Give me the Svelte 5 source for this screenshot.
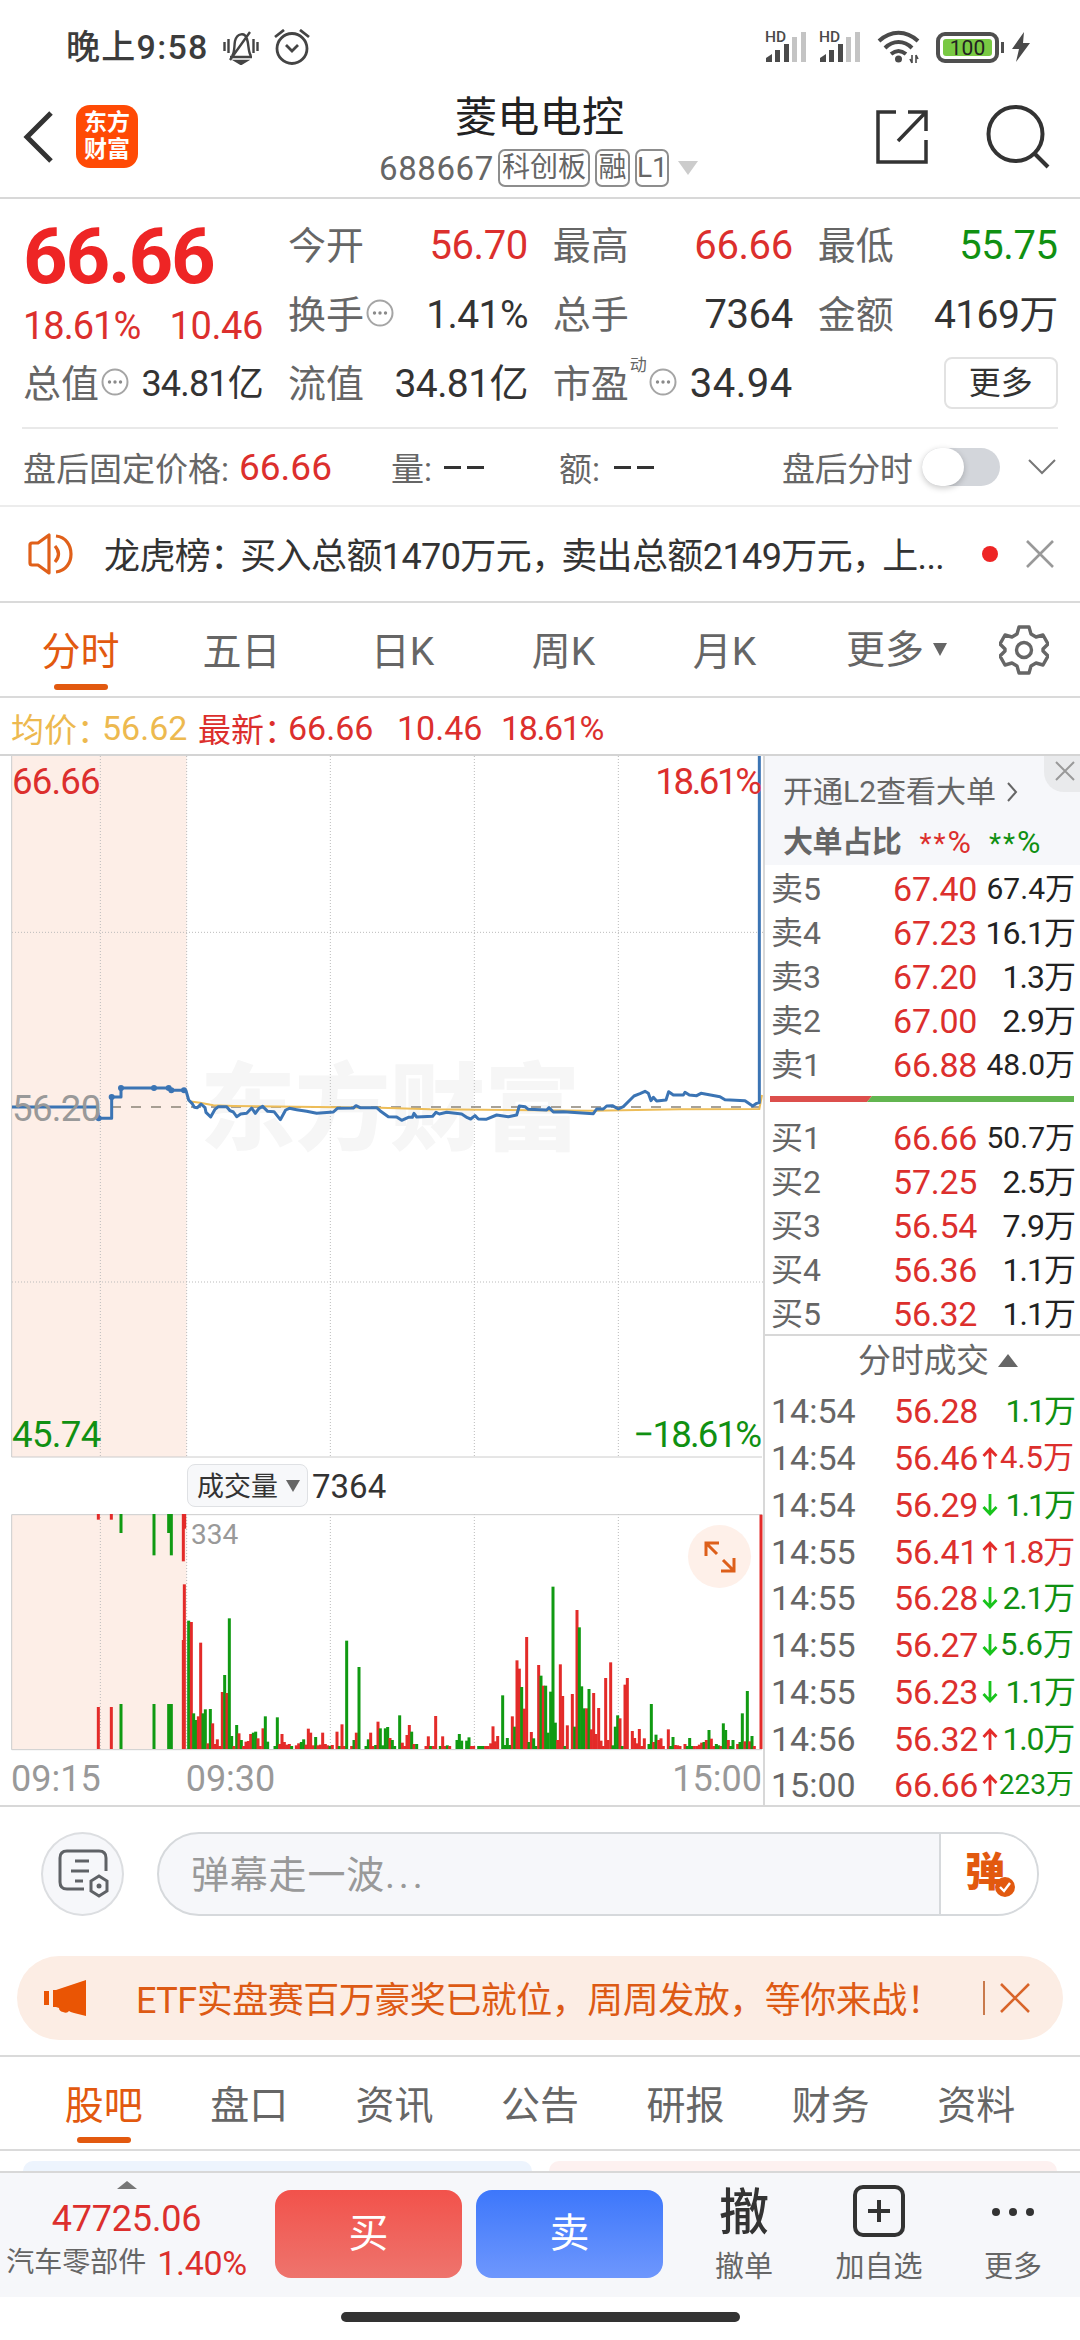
<script>
  const sells = [
    ['卖5', '67.40', '67.4万', true],
    ['卖4', '67.23', '16.1万', false],
    ['卖3', '67.20', '1.3万', false],
    ['卖2', '67.00', '2.9万', false],
    ['卖1', '66.88', '48.0万', true]
  ];
  const buys = [
    ['买1', '66.66', '50.7万', true],
    ['买2', '57.25', '2.5万', false],
    ['买3', '56.54', '7.9万', false],
    ['买4', '56.36', '1.1万', false],
    ['买5', '56.32', '1.1万', false]
  ];
  const deals = [
    ['14:54', '56.28', '', '1.1万', 'green', 'slim'],
    ['14:54', '56.46', 'up', '4.5万', 'red', ''],
    ['14:54', '56.29', 'down', '1.1万', 'green', 'slim'],
    ['14:55', '56.41', 'up', '1.8万', 'red', 'mid'],
    ['14:55', '56.28', 'down', '2.1万', 'green', 'mid'],
    ['14:55', '56.27', 'down', '5.6万', 'green', ''],
    ['14:55', '56.23', 'down', '1.1万', 'green', 'slim'],
    ['14:56', '56.32', 'up', '1.0万', 'green', 'mid'],
    ['15:00', '66.66', 'up', '223万', 'green', 'small']
  ];
  const periods = ['分时', '五日', '日K', '周K', '月K'];
  const sections = ['股吧', '盘口', '资讯', '公告', '研报', '财务', '资料'];

  // Chart units are thirds of a pixel; each entry is colour, x, bar height.
  const parse = (text, shift, base) =>
    text.trim().split(/\s+/).map((s) => {
      const [x, y] = s.slice(1).split(',').map(Number);
      return { color: s[0] === 'r' ? '#e32b29' : '#109a12', x: x + shift, h: base - y };
    });
  const morning = `r550,780 r553,613 g566,722 r574,726 g581,1000 g588,1020 r595,1009 r602,788 g609,1000 g616,988 r624,1090 g631,987 r638,1030 r645,1092 r652,1078 r659,1098 r667,936 g674,885 r681,939 g688,715 g695,1068 r702,1098 g710,1035 r717,1060 g724,1080 r731,1098 r738,1085 r745,1083 r752,1062 g760,1058 g767,1055 r774,1075 r781,1098 r789,1045 g796,1009 g803,1085 g825,1098 g832,1012 r839,1092 r846,1062 r853,1086 r860,1094 r868,1092 g875,1098 r889,1096 r896,1090 g904,1086 g911,1078 r918,1094 r925,1046 r932,1058 r940,1096 g947,1071 r954,1096 r961,1094 r968,1058 r976,1092 r983,1096 g990,1098 r997,1095 r1011,1055 g1018,1098 r1026,1033 r1033,1098 g1040,782 r1055,1098 g1062,1080 r1069,1058 g1077,861 g1098,1098 g1105,1078 r1112,1058 r1119,1098 g1127,1095 r1134,1025 g1141,1045 g1148,1096 g1156,1045 g1163,1041 r1170,1074 g1177,1080 g1184,1098 g1199,1006`;
  const afternoon = `r67,1088 r74,1098 r81,1065 r88,1035 g95,1055 r102,1092 g110,1092 r138,1098 r145,1069 g152,1098 r160,1098 r167,1008 g181,1098 r188,1069 r195,1098 g202,1096 r209,1098 g231,1080 g238,1062 g245,1082 g260,1082 g267,1072 r274,1098 r281,1098 g296,1098 g303,1098 g310,1098 r317,1098 r324,1098 r332,1090 r339,1039 r346,1084 r353,1068 g368,946 g375,1095 g382,1074 g389,1095 r397,1009 g404,1040 r411,841 r418,866 g425,921 r433,986 r440,771 g447,1086 r454,1056 g461,1075 g468,1098 r476,855 g483,887 r490,917 g497,917 g504,1058 g512,935 g519,620 g526,1028 r533,1080 r541,853 r548,948 g555,1098 r562,1036 r577,942 g584,1040 r591,690 g598,742 g605,919 g612,985 r620,985 g627,927 r634,1048 r641,939 r648,1062 r656,984 r663,1082 r670,1098 r677,894 r684,1080 r692,847 g699,1096 g706,1040 g713,1006 r720,1015 g727,1098 r735,914 r742,894 r757,1053 r764,1074 r771,1090 r778,1047 r785,1098 r793,1075 g807,1092 g814,972 r821,1086 g828,1064 r836,1080 r843,1075 r850,1098 r865,1048 g872,1098 g879,1071 r886,1095 r893,1096 r900,1098 r915,1092 g922,1098 g929,1074 g936,1098 r943,1098 r951,1098 r958,1094 r965,1088 g972,1086 r979,1080 g987,1050 r994,1076 r1001,1098 g1009,1092 g1016,1096 r1023,1098 g1030,1030 g1037,1050 r1045,1080 g1052,1098 g1059,1080 r1073,1092 g1080,1086 g1087,1000 r1095,1084 g1102,933 r1109,1084 g1116,1068 r1123,1098 r1143,404`;
  const auction = `r295,981 r334,981 g363,972 g462,972 g506,972 g514,972`;
  const bars = [
    ...parse(auction, 0, 1107),
    ...parse(morning, 0, 1107),
    ...parse(afternoon, 1140, 1107)
  ];
  const unmatched = [
    ['#e32b29', 295, 17], ['#e32b29', 334, 17], ['#109a12', 363, 57], ['#109a12', 462, 124],
    ['#109a12', 506, 57], ['#109a12', 514, 124], ['#e32b29', 550, 142], ['#e32b29', 554, 44]
  ];

  const first = '36,201 292,201 296,235 335,235 335,171 363,171 363,144 506,144 514,151 552,151 558,152 566,180 576,190 583,202 592,203 603,192 615,203 618,217 632,231 645,208 655,200 680,200 690,212 700,216 710,230 722,222 740,220 755,204 766,220 777,205 788,199 803,214 822,215 841,239 857,210 868,205 890,209 920,214 950,220 1000,216 1012,205 1060,204 1068,197 1080,203 1130,203';
  const second = '0,212 25,230 50,231 65,241 85,232 97,232 102,220 110,231 158,229 168,217 178,222 200,217 245,222 262,233 272,237 285,227 295,237 318,238 350,225 385,230 410,225 418,198 435,200 445,208 500,210 507,203 520,216 550,215 640,221 650,207 670,207 680,198 697,197 715,207 730,200 762,168 780,161 795,154 805,160 813,182 820,172 830,183 858,180 866,155 880,165 910,165 915,157 928,165 950,167 963,160 1020,170 1035,179 1095,182 1118,198 1130,190 1138,188 1138,-852';
  const move = (text, dx) =>
    text.split(' ').map((p) => {
      const [x, y] = p.split(',').map(Number);
      return `${x + dx},${y + 852}`;
    }).join(' ');
  const priceLine = move(first, 0) + ' ' + move(second, 1140);
  const avgLine = move('566,184 600,188 640,196 700,198 1140,203 1290,208 1780,212 2040,208 2278,207 2286,165', 0);
  const dots = [[335, 1023], [363, 996], [462, 996], [506, 996], [514, 1003], [552, 1003], [296, 1087]];
</script>

{#snippet hint()}
  <svg class="hint" width="28" height="28" viewBox="0 0 28 28">
    <circle cx="14" cy="14" r="12.500" fill="none" stroke="#a5a5a5" stroke-width="2" />
    <g fill="#8a8a8a"><circle cx="8.500" cy="14" r="1.700" /><circle cx="14" cy="14" r="1.700" /><circle cx="19.500" cy="14" r="1.700" /></g>
  </svg>
{/snippet}

<div class="screen">
  <div class="status">
    <span class="time">晚上9:58</span>
    <svg class="mute" width="36" height="36" viewBox="0 0 36 36" fill="none" stroke="#444" stroke-width="2.4">
      <path d="M7 28h22M9 27c3-4 2-10 3-15 2-8 10-9 12-2 2 6 1 13 4 17M7 31 27 3" />
      <path d="M13 32h10l-5 3z" fill="#444" />
      <path d="M1.500 13v9M5.500 10v14M30.500 10v14M34.500 13v9" />
    </svg>
    <svg class="alarm" width="36" height="36" viewBox="0 0 36 36" fill="none" stroke="#444" stroke-width="2.8">
      <circle cx="18" cy="19.500" r="15" /><path d="m12 16 6 6 6-6M1 8l9-7M35 8l-9-7" />
    </svg>
    <div class="grow"></div>
    {#each [0, 1] as n}
      <svg class="signal" width="42" height="38" viewBox="0 0 42 38">
        <text x="0" y="15" class="hd">HD</text>
        <path d="M1 35v-4l6-4v8zM10 35V23h5v12zM19 35V17h5v18z" fill="#4a4a4a" />
        <path d="M27 35V10h5v25zM36 35V5h5v30z" fill="#c4c4c4" />
      </svg>
    {/each}
    <svg class="wifi" width="44" height="36" viewBox="0 0 44 36" fill="none" stroke="#4a4a4a" stroke-width="4">
      <path d="M2 12c12-11 27-11 39 0M8 19c8-8 19-8 27 0M14 25c5-4 10-4 15 0" />
      <circle cx="21.500" cy="30" r="3.500" fill="#4a4a4a" stroke="none" />
      <path d="M35 26v8m-2-4 2 4M39 34v-8m2 4-2-4" stroke-width="1.600" />
    </svg>
    <div class="battery"><div class="charge">100</div></div>
    <div class="cap"></div>
    <svg width="20" height="32" viewBox="0 0 20 32"><path d="M13 1 1 18h7L5 31 19 12h-7z" fill="#4a4a4a" /></svg>
  </div>

  <header>
    <svg class="back" width="34" height="56" viewBox="0 0 34 56" fill="none" stroke="#333" stroke-width="5"><path d="M30 4 6 28l24 24" /></svg>
    <div class="logo"><span>东方</span><span>财富</span></div>
    <div class="title">
      <div class="name">菱电电控</div>
      <div class="code">
        <span class="num">688667</span><i class="t1">科创板</i><i class="t2">融</i><i class="t3">L1</i>
        <svg width="20" height="14" viewBox="0 0 20 14"><path d="M0 0h20L10 14z" fill="#ccc" /></svg>
      </div>
    </div>
    <svg class="share" width="54" height="56" viewBox="0 0 54 56" fill="none" stroke="#333" stroke-width="3.500">
      <path d="M21 3H3v50h48V31M33 3h18v19M50 4 23 32" />
    </svg>
    <svg class="find" width="66" height="66" viewBox="0 0 66 66" fill="none" stroke="#333" stroke-width="4">
      <circle cx="30.500" cy="31" r="27" /><path d="m49 50 14 14" />
    </svg>
  </header>

  <section class="quote">
    <div class="price">66.66</div>
    <div class="cell"><b>今开</b><em class="red">56.70</em></div>
    <div class="cell"><b>最高</b><em class="red">66.66</em></div>
    <div class="cell"><b>最低</b><em class="green">55.75</em></div>
    <div class="cell change"><em class="red pct">18.61%</em><em class="red">10.46</em></div>
    <div class="cell"><b>换手</b>{@render hint()}<em class="close">1.41%</em></div>
    <div class="cell"><b>总手</b><em>7364</em></div>
    <div class="cell"><b>金额</b><em class="close">4169万</em></div>
    <div class="cell"><b>总值</b>{@render hint()}<em class="tight">34.81亿</em></div>
    <div class="cell"><b>流值</b><em class="close">34.81亿</em></div>
    <div class="cell"><b>市盈</b><sup>动</sup>{@render hint()}<em class="loose">34.94</em></div>
    <div class="cell"><button class="more">更多</button></div>
  </section>

  <section class="after">
    <span class="a1">盘后固定价格:</span><span class="a2 red">66.66</span>
    <span class="a3">量:</span><span class="dash"></span><span class="dash"></span>
    <span class="a4">额:</span><span class="dash"></span><span class="dash"></span>
    <span class="a5">盘后分时</span>
    <div class="toggle"><div class="knob"></div></div>
    <svg width="28" height="16" viewBox="0 0 28 16" fill="none" stroke="#777" stroke-width="2"><path d="m1 1 13 13L27 1" /></svg>
  </section>

  <section class="notice">
    <svg width="48" height="42" viewBox="0 0 48 42" fill="none" stroke="#e0601a" stroke-width="3.200">
      <path d="M3 12q0-2 2-2h6L22 2v38L11 32H5q-2 0-2-2z" stroke-linejoin="round" />
      <path d="M28 13q7 8 0 16M29 3c20 2 20 34 0 36" />
    </svg>
    <p>龙虎榜<i>：</i>买入总额1470万元<i>，</i>卖出总额2149万元<i>，</i>上...</p>
    <div class="reddot"></div>
    <svg width="28" height="28" viewBox="0 0 28 28" stroke="#999" stroke-width="2.600"><path d="m1 1 26 26M27 1 1 27" /></svg>
  </section>

  <nav class="periods">
    {#each periods as p, i}
      <span class:active={i === 0}>{p}</span>
    {/each}
    <span class="last">更多<svg width="14" height="13" viewBox="0 0 14 13"><path d="M0 0h14L7 13z" fill="#666" /></svg></span>
    <svg class="gear" width="50" height="50" viewBox="0 0 50 50" fill="none" stroke="#666" stroke-width="3.400" stroke-linejoin="round">
      <path d="M20 2h10l2 7 5 3 7-2 5 9-5 5v2l5 5-5 9-7-2-5 3-2 7H20l-2-7-5-3-7 2-5-9 5-5v-2l-5-5 5-9 7 2 5-3z" />
      <circle cx="25" cy="25" r="7.500" />
    </svg>
  </nav>

  <div class="summary">
    <span class="yellow">均价：</span><span class="yellow s1">56.62</span>
    <span class="red s2">最新：</span><span class="red s3">66.66</span>
    <span class="red s4">10.46</span><span class="red s5">18.61%</span>
  </div>

  <main>
    <div class="charts">
      <svg class="pricechart" width="763" height="702" viewBox="0 0 2289 2106">
        <rect x="36" y="0" width="524" height="2103" fill="#fdeee7" />
        <text x="600" y="1162" class="mark" textLength="1140">东方财富</text>
        <g stroke="#bbb" stroke-width="3" stroke-dasharray="3 6">
          <path d="M301 0V2103M560 0V2103M991 0V2103M1423 0V2103M1855 0V2103M36 529H2289M36 1578H2289" />
        </g>
        <path d="M35 0V2103H2286" fill="none" stroke="#ccc" stroke-width="3" />
        <path d="M333 1053H2280" stroke="#8b8478" stroke-width="5" stroke-dasharray="30 30" />
        <polyline points={avgLine} fill="none" stroke="#edbd58" stroke-width="6" />
        <polyline points={priceLine} fill="none" stroke="#3b74b4" stroke-width="9" stroke-linejoin="round" />
        {#each dots as [x, y]}<circle cx={x} cy={y} r="9" fill="#3b74b4" />{/each}
        <g class="axis">
          <text x="36" y="114" fill="#dc2f2d" textLength="266">66.66</text>
          <text x="1966" y="114" fill="#dc2f2d" textLength="320">18.61%</text>
          <text x="36" y="1095" fill="#999" textLength="268">56.20</text>
          <text x="36" y="2072" fill="#109012" textLength="268">45.74</text>
          <text x="1900" y="2072" fill="#109012" textLength="386">−18.61%</text>
        </g>
      </svg>
      <div class="volhead">
        <div class="pick"><span>成交量</span><svg width="14" height="12" viewBox="0 0 14 12"><path d="M0 0h14L7 12z" fill="#666" /></svg></div>
        <span class="vol">7364</span>
      </div>
      <div class="volwrap">
        <svg width="763" height="237" viewBox="0 0 2289 711">
          <rect x="36" y="3" width="524" height="702" fill="#fdeee7" />
          <path d="M301 0V705M560 0V705M991 0V705M1423 0V705M1855 0V705" stroke="#bbb" stroke-width="3" stroke-dasharray="3 6" />
          <path d="M2286 2H35V707H2286" fill="none" stroke="#ccc" stroke-width="3" />
          {#each bars as b}<rect x={b.x - 4.5} y={705 - b.h} width="9" height={b.h} fill={b.color} />{/each}
          {#each unmatched as [c, x, h]}<rect x={x - 4.5} y="0" width="9" height={h} fill={c} />{/each}
          <text x="573" y="91" class="maxvol" textLength="142">334</text>
        </svg>
        <div class="expand">
          <svg width="32" height="32" viewBox="0 0 32 32" fill="none" stroke="#dd5f1a" stroke-width="3">
            <path d="M2 15V2h13M2 2l11 11M17 30h13V17M30 30 19 19" />
          </svg>
        </div>
      </div>
      <div class="times"><span>09:15</span><span class="t930">09:30</span><span class="t1500">15:00</span></div>
    </div>

    <aside>
      <div class="level2">
        <div class="open">开通L2查看大单<svg width="12" height="20" viewBox="0 0 12 20" fill="none" stroke="#666" stroke-width="2"><path d="m2 1 8 9-8 9" /></svg></div>
        <div class="ratio"><strong>大单占比</strong><span class="red"><i>**</i>%</span><span class="green"><i>**</i>%</span></div>
        <div class="corner"><svg width="20" height="20" viewBox="0 0 20 20" stroke="#999" stroke-width="2"><path d="m1 1 18 18M19 1 1 19" /></svg></div>
      </div>
      <div class="book">
        {#each sells as [l, p, v, s]}
          <div class="row"><span class="lab">{l}</span><span class="p red">{p}</span><span class="v" class:small={s}>{v}</span></div>
        {/each}
      </div>
      <svg class="balance" width="304" height="6" viewBox="0 0 304 6"><path d="M0 0h102l-5 6H0z" fill="#dc4f4c" /><path d="M102 0h202v6H97z" fill="#62b550" /></svg>
      <div class="book buy">
        {#each buys as [l, p, v, s]}
          <div class="row"><span class="lab">{l}</span><span class="p red">{p}</span><span class="v" class:small={s}>{v}</span></div>
        {/each}
      </div>
      <div class="dealhead">分时成交<svg width="20" height="13" viewBox="0 0 20 13"><path d="M0 13h20L10 0z" fill="#666" /></svg></div>
      <div class="deals">
        {#each deals as [t, p, d, v, c, s]}
          <div class="row">
            <span class="tm">{t}</span><span class="p red">{p}</span>
            <svg width="16" height="22" viewBox="0 0 16 22" fill="none" stroke={d === 'up' ? '#e32b29' : '#18c41c'} stroke-width="2.800">
              {#if d === 'up'}<path d="M8 22V2M1.500 9 8 2l6.500 7" />{/if}
              {#if d === 'down'}<path d="M8 0v20M1.500 13 8 20l6.500-7" />{/if}
            </svg>
            <span class="v {c} {s}">{v}</span>
          </div>
        {/each}
      </div>
    </aside>
  </main>

  <section class="comment">
    <div class="round">
      <svg width="52" height="50" viewBox="0 0 52 50" fill="none" stroke="#5f6266" stroke-width="3">
        <path d="M48 22V9q0-7-7-7H9Q2 2 2 9v24q0 7 7 7h17M17 12h14M13 22h18M17 32h8" />
        <path d="m41 27 8 5v10l-8 5-8-5V32z" /><circle cx="41" cy="37" r="2.500" fill="#5f6266" stroke="none" />
      </svg>
    </div>
    <div class="field">
      <span>弹幕走一波<i>...</i></span>
      <div class="danmu"><div class="dan">弹
        <svg width="20" height="20" viewBox="0 0 20 20"><circle cx="10" cy="10" r="10" fill="#e2590f" /><path d="m5 10 4 4 6-8" fill="none" stroke="#fff" stroke-width="2.400" /></svg></div>
      </div>
    </div>
  </section>

  <section class="banner">
    <svg width="44" height="38" viewBox="0 0 44 38" fill="#ea5504"><path d="M0 12h5v14H0zM9 11h3L42 1v36l-12-3q-4-1-5-2-2 3-6 1-4-1-4-4l-3-1H9z" /></svg>
    <p>ETF实盘赛百万豪奖已就位，周周发放，等你来战！</p>
    <div class="bar"></div>
    <svg width="30" height="30" viewBox="0 0 30 30" stroke="#d9652a" stroke-width="2.600"><path d="m1 1 28 28M29 1 1 29" /></svg>
  </section>

  <nav class="sections">
    {#each sections as s, i}<span class:active={i === 0}>{s}</span>{/each}
  </nav>
  <div class="cards"><div class="c1"></div><div class="c2"></div></div>

  <footer>
    <div class="index">
      <svg width="20" height="8" viewBox="0 0 20 8"><path d="M0 8h20L10 0z" fill="#777" /></svg>
      <div class="idx red">47725.06</div>
      <div class="ind"><span>汽车零部件</span><span class="red pctv">1.40%</span></div>
    </div>
    <button class="buybtn">买</button>
    <button class="sellbtn">卖</button>
    <div class="act a"><strong>撤</strong><span>撤单</span></div>
    <div class="act b">
      <svg width="52" height="52" viewBox="0 0 52 52" fill="none" stroke="#333" stroke-width="4"><rect x="2" y="2" width="48" height="48" rx="8" /><path d="M26 15v22M15 26h22" /></svg>
      <span>加自选</span>
    </div>
    <div class="act c">
      <svg width="44" height="52" viewBox="0 0 44 52" fill="#333"><circle cx="5" cy="27" r="4" /><circle cx="22" cy="27" r="4" /><circle cx="39" cy="27" r="4" /></svg>
      <span>更多</span>
    </div>
  </footer>
  <div class="home"><div></div></div>
</div>

<style>
  :global(body) { margin: 0; background: #fff; }
  .screen, .screen * { box-sizing: border-box; }
  .screen {
    width: 1080px; height: 2340px; overflow: hidden; background: #fff; color: #333;
    font-family: Roboto, "Noto Sans CJK SC", sans-serif; display: flex; flex-direction: column;
  }
  .screen > * { flex: none; }
  svg { display: block; flex: none; }
  p { margin: 0; white-space: nowrap; }
  em, i, b { font-style: normal; font-weight: 400; }
  button { font-family: inherit; padding: 0; border: 0; }
  .red { color: #dc2f2d; }
  .green { color: #109012; }
  .yellow { color: #edb94f; }
  .grow { flex: 1; }

  .status { height: 94px; display: flex; align-items: center; padding-left: 66px; padding-right: 49px; }
  .time { font-size: 34px; line-height: 44px; margin-top: -1px; font-weight: 500; letter-spacing: 1.3px; width: 143px; white-space: nowrap; color: #3c3c3c; }
  .mute { margin-left: 14px; }
  .alarm { margin-left: 15px; margin-top: -1px; }
  .signal { margin: -3px 12px 0 0; }
  .hd { font-size: 15.5px; font-weight: 500; fill: #4a4a4a; }
  .wifi { margin: 0 15px 0 4px; }
  .battery { width: 63px; height: 31px; border: 4px solid #4f4f4f; border-radius: 9px; padding: 3px; }
  .charge { height: 17px; border-radius: 3px; background: #79c943; font-size: 21px; line-height: 18px; text-align: center; color: #222; }
  .cap { width: 3px; height: 11px; background: #4f4f4f; margin: 0 7px 0 2px; }

  header { height: 105px; border-bottom: 2px solid #d8d8d8; display: flex; align-items: flex-start; padding-left: 21px; }
  .back { margin-top: 15px; }
  .logo { margin: 11px 0 0 21px; width: 62px; height: 63px; border-radius: 14px; background: #ff4a05; color: #fff; font-size: 23px; font-weight: 700; line-height: 27px; display: flex; flex-direction: column; align-items: center; padding-top: 4px; }
  .title { margin-left: 241px; width: 321px; display: flex; flex-direction: column; }
  .name { font-size: 42px; line-height: 46px; padding-left: 76px; color: #222; letter-spacing: 0.3px; position: relative; top: 1px; }
  .code { display: flex; align-items: center; height: 46px; margin-top: 5px; color: #666; }
  .num { font-size: 33px; letter-spacing: 0.6px; width: 119px; }
  .code i { border: 2px solid #8d8d8d; border-radius: 7px; height: 38px; font-size: 28px; line-height: 34px; text-align: center; margin-right: 5px; white-space: nowrap; }
  .t1 { width: 92px; } .t2 { width: 35px; } .t3 { width: 34px; }
  .code svg { margin-left: 4px; }
  .share { margin: 15px 0 0 175px; }
  .find { margin: 9px 0 0 56px; }

  .quote { height: 230px; padding: 12px 23px 0; display: grid; grid-template-columns: repeat(4, 240px); column-gap: 24.9px; grid-template-rows: repeat(3, 69px); border-bottom: 2px solid #eaeaea; background-clip: content-box; border-image: linear-gradient(90deg, #fff 23px, #e9e9e9 23px, #e9e9e9 1057px, #fff 1057px) 1; }
  .price { font-size: 78px; font-weight: 700; letter-spacing: -2.2px; line-height: 92px; color: #ee2525; height: 69px; }
  .cell { display: flex; align-items: center; line-height: 60px; font-size: 39px; white-space: nowrap; }
  .cell b { font-size: 38px; color: #666; }
  .cell em { margin-left: auto; letter-spacing: -0.4px; font-size: 40px; }
  .cell em.tight { font-size: 36px; letter-spacing: -0.8px; }
  .cell em.close { font-size: 39px; letter-spacing: -0.6px; }
  .cell em.loose { letter-spacing: 0.5px; }
  .change { padding-top: 22px; }
  .change em { font-size: 38px; }
  .change em.pct { margin-left: 0; letter-spacing: -1px; }
  .hint { margin-left: 2px; margin-top: -4px; }
  .cell sup { font-size: 17px; line-height: 20px; color: #666; margin: -38px 0 0 1px; }
  .more { margin-left: auto; margin-top: -2px; width: 114px; height: 52px; border: 2px solid #e2e2e2; border-radius: 8px; background: #fff; font-size: 32px; line-height: 44px; color: #333; }

  .after { height: 78px; padding-left: 23px; display: flex; align-items: center; font-size: 33px; color: #666; border-bottom: 2px solid #ececec; white-space: nowrap; }
  .a1 { width: 216px; }
  .a2 { font-size: 37px; width: 152px; }
  .a3 { width: 53px; } .a4 { width: 55px; margin-left: 69px; }
  .dash { width: 17px; height: 3px; background: #333; margin-right: 6px; }
  .a5 { margin-left: 122px; width: 140px; letter-spacing: -0.4px; }
  .toggle { width: 78px; height: 38px; border-radius: 19px; background: #d3d6db; display: flex; align-items: center; }
  .knob { width: 42px; height: 38px; border-radius: 20px; background: #fff; box-shadow: 0 2px 6px rgba(0,0,0,.22); }
  .after svg { margin-left: 28px; }

  .notice { height: 96px; display: flex; align-items: center; padding-left: 27px; border-bottom: 2px solid #dadada; }
  .notice p { margin-left: 29px; margin-top: -3px; width: 878px; font-size: 36px; letter-spacing: -0.6px; }
  .notice p i { letter-spacing: -6px; }
  .reddot { width: 16px; height: 16px; border-radius: 50%; background: #ee2525; }
  .notice > svg:last-child { margin-left: 28px; }

  .periods { height: 95px; display: flex; align-items: center; border-bottom: 2px solid #dadada; font-size: 39px; color: #666; }
  .periods span { width: 161px; text-align: center; height: 93px; line-height: 98px; }
  .active { color: #e2590f; position: relative; }
  .active::after { content: ""; position: absolute; left: 50%; bottom: 6px; width: 54px; height: 6px; margin-left: -27px; border-radius: 3px; background: #e2590f; }
  .periods .last { display: flex; align-items: center; width: 151px; padding-left: 41px; }
  .last svg { margin-left: 9px; }
  .gear { margin-left: 43px; }

  .summary { height: 58px; padding: 3px 0 0 11px; display: flex; align-items: center; font-size: 34px; border-bottom: 2px solid #d4d4d4; white-space: nowrap; }
  .s1 { width: 96px; margin-left: -8px; } .s2 { width: 90px; } .s3 { width: 109px; } .s4 { width: 104px; } .s5 { letter-spacing: -1.4px; }
  .summary .yellow:first-child, .summary .s2 { font-size: 33px; }

  main { display: flex; height: 1051px; border-bottom: 2px solid #d8d8d8; }
  .charts { width: 763px; height: 1049px; display: flex; flex-direction: column; }
  .charts > * { flex: none; }
  .axis text { font-size: 110px; }
  .mark { font-size: 286px; font-weight: 900; fill: #f6f6f6; }
  .volhead { height: 56px; padding: 6px 0 0 187px; display: flex; }
  .pick { width: 121px; height: 43px; border: 1px solid #dfe1e4; border-radius: 8px; background: #f7f8fa; font-size: 27px; line-height: 40px; padding-left: 9px; display: flex; align-items: center; }
  .pick span { padding-top: 2px; }
  .pick svg { margin-left: 8px; }
  .vol { font-size: 33px; line-height: 45px; margin-left: 4px; }
  .volwrap { position: relative; height: 237px; }
  .maxvol { font-size: 84px; fill: #999; }
  .expand { position: absolute; left: 688px; top: 11px; width: 63px; height: 63px; border-radius: 50%; background: #fef0e9; display: flex; align-items: center; justify-content: center; }
  .times { height: 54px; padding: 3px 1px 0 11px; display: flex; font-size: 36px; color: #999; line-height: 51px; }
  .t930 { margin-left: 85px; } .t1500 { margin-left: auto; }

  aside { width: 317px; border-left: 2px solid #d8d8d8; color: #222; }
  .level2 { height: 109px; background: #f6f7fa; position: relative; padding: 13px 0 0 18px; color: #666; }
  .open { font-size: 30px; line-height: 46px; display: flex; align-items: center; }
  .open svg { margin-left: 10px; }
  .ratio { font-size: 30px; line-height: 54px; display: flex; }
  .ratio strong { letter-spacing: -0.4px; }
  .ratio span { font-size: 32px; margin-left: 18px; }
  .ratio i { letter-spacing: 2px; font-size: 28px; }
  .corner { position: absolute; right: 0; top: 0; width: 36px; height: 36px; background: #e9eaec; border-bottom-left-radius: 20px; padding: 5px 0 0 11px; }
  .book { padding: 2px 0 0 6px; }
  .row { display: flex; align-items: center; height: 44.1px; line-height: 44px; }
  .lab { font-size: 32px; color: #666; width: 70px; white-space: nowrap; }
  .p { width: 136px; text-align: right; font-size: 34px; letter-spacing: -0.3px; }
  .book .v { width: 98px; text-align: right; font-size: 32px; letter-spacing: -1px; white-space: nowrap; }
  .book .v.small { font-size: 30px; letter-spacing: 0; }
  .balance { margin: 9px 0 0 5px; }
  .book.buy { padding-top: 13px; }
  .dealhead { height: 54px; margin-top: -2px; border-top: 2px solid #d8d8d8; font-size: 33px; line-height: 48px; color: #666; display: flex; align-items: center; padding: 0 0 1px 93px; letter-spacing: -0.3px; }
  .dealhead svg { margin-left: 9px; margin-top: -2px; }
  .deals { padding-left: 6px; }
  .deals .row { height: 46.75px; }
  .tm { width: 86px; font-size: 34px; color: #666; }
  .deals .p { width: 121px; font-size: 34px; margin-right: 4px; }
  .deals .v { width: 76px; text-align: right; font-size: 31px; white-space: nowrap; }
  .deals .v.mid { font-size: 32px; letter-spacing: -1.2px; }
  .deals .v.slim { font-size: 32px; letter-spacing: -2px; }
  .deals .v.small { font-size: 28px; }

  .comment { height: 110px; padding: 25px 0 0 41px; display: flex; gap: 33px; }
  .round { width: 83px; height: 84px; border: 2px solid #dcdee1; border-radius: 50%; background: #f6f7fa; display: flex; align-items: center; justify-content: center; padding-left: 2px; }
  .field { width: 882px; height: 84px; border: 2px solid #d6d9dc; border-radius: 42px; background: #f6f7fa; display: flex; overflow: hidden; font-size: 38px; color: #999; line-height: 82px; padding-left: 32px; }
  .field span { flex: 1; letter-spacing: 0.8px; }
  .field i { letter-spacing: 3.8px; }
  .danmu { width: 98px; border-left: 2px solid #d6d9dc; background: #fff; padding-left: 24px; }
  .dan { position: relative; width: 44px; color: #e2590f; font-weight: 900; font-size: 40px; line-height: 77px; }
  .dan svg { position: absolute; right: -6px; bottom: 14px; }

  .banner { margin: 39px 17px 0; height: 84px; border-radius: 42px; background: #fcede4; display: flex; align-items: center; padding-left: 27px; color: #dd5a14; }
  .banner p { margin-left: 48px; margin-top: -3px; width: 847px; font-size: 36px; letter-spacing: -0.5px; }
  .banner .bar { width: 1.500px; height: 34px; background: #c97a4c; margin-right: 15px; }

  .sections { margin-top: 15px; height: 96px; border-top: 2px solid #dadada; border-bottom: 2px solid #dadada; padding: 0 31px; display: flex; font-size: 39px; color: #666; }
  .sections span { flex: 1; text-align: center; line-height: 99px; }
  .cards { height: 20px; padding: 10px 23px 0; display: flex; gap: 17px; }
  .cards div { flex: 1; border-radius: 12px 12px 0 0; }
  .c1 { background: #edf4fd; } .c2 { background: #fdf1f0; }

  footer { height: 126px; background: #f6f7fa; border-top: 2px solid #d8d8d8; display: flex; }
  .index { width: 275px; padding-top: 8px; display: flex; flex-direction: column; align-items: center; padding-right: 22px; }
  .idx { font-size: 36px; line-height: 44px; margin-top: 8px; letter-spacing: -0.2px; }
  .ind { display: flex; align-items: center; line-height: 44px; font-size: 28px; color: #666; white-space: nowrap; }
  .pctv { font-size: 34px; margin-left: 11px; letter-spacing: -0.3px; }
  .buybtn, .sellbtn { width: 187px; height: 88px; margin-top: 17px; border-radius: 16px; color: #fff; font-size: 40px; line-height: 80px; padding-bottom: 0; }
  .buybtn { background: linear-gradient(#f2524b, #ee746d); }
  .sellbtn { margin-left: 14px; background: linear-gradient(#3d77fb, #6e97fd); }
  .act { display: flex; flex-direction: column; align-items: center; width: 100px; color: #333; padding-top: 12px; }
  .act.a { margin-left: 31px; } .act.b { margin-left: 35px; } .act.c { margin-left: 34px; }
  .act strong { font-size: 50px; font-weight: 500; line-height: 56px; height: 52px; }
  .act span { font-size: 29px; line-height: 40px; margin-top: 10px; color: #666; }
  .home { flex: 1; display: flex; justify-content: center; padding-top: 15px; }
  .home div { width: 399px; height: 10px; border-radius: 5px; background: #333; }
</style>
